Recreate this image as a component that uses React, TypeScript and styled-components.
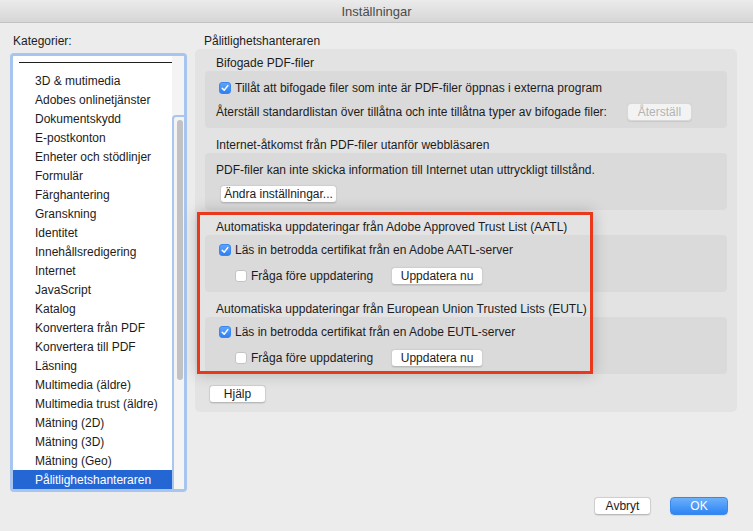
import React from 'react';
import styled, { createGlobalStyle, css } from 'styled-components';

const GlobalStyle = createGlobalStyle`
    html, body {
        margin: 0;
        padding: 0;
        background: #ececec;
    }
    body {
        font-family: 'Liberation Sans', Arial, sans-serif;
        font-size: 12px;
        color: #1c1c1c;
    }
`;

const CATEGORIES = [
    '3D & mutimedia',
    'Adobes onlinetjänster',
    'Dokumentskydd',
    'E-postkonton',
    'Enheter och stödlinjer',
    'Formulär',
    'Färghantering',
    'Granskning',
    'Identitet',
    'Innehållsredigering',
    'Internet',
    'JavaScript',
    'Katalog',
    'Konvertera från PDF',
    'Konvertera till PDF',
    'Läsning',
    'Multimedia (äldre)',
    'Multimedia trust (äldre)',
    'Mätning (2D)',
    'Mätning (3D)',
    'Mätning (Geo)',
    'Pålitlighetshanteraren',
];

const Window = styled.div`
    position: relative;
    width: 753px;
    height: 531px;
    display: flex;
    flex-direction: column;
    background: #ececec;
    overflow: hidden;
`;

const TitleBar = styled.div`
    height: 22px;
    flex: none;
    display: flex;
    align-items: center;
    justify-content: center;
    background: linear-gradient(#ebebeb, #d6d6d6);
    border-bottom: 1px solid #c2c2c2;
    color: #4b4b4b;
    font-size: 13px;
`;

const Body = styled.div`
    display: flex;
    gap: 8px;
    padding: 10px 16px 0 10px;
`;

const Sidebar = styled.div`
    width: 177px;
    flex: none;
    display: flex;
    flex-direction: column;
`;

const Label = styled.div<{ $indent?: number }>`
    height: 16px;
    line-height: 16px;
    padding-left: ${props => props.$indent || 0}px;
    white-space: nowrap;
`;

const ListBox = styled.div`
    margin-top: 4px;
    height: 439px;
    box-sizing: border-box;
    border: 3px solid #a7c5ef;
    border-radius: 4px;
    background: #fff;
    display: flex;
`;

const ListContent = styled.div`
    flex: 1;
    padding-top: 6px;
`;

const Divider = styled.div`
    height: 1px;
    margin: 0 0 8px 6px;
    background: #1e1e1e;
`;

const ListItem = styled.div<{ $selected?: boolean }>`
    height: 19px;
    line-height: 20px;
    padding-left: 22px;
    white-space: nowrap;
    color: #1c1c1c;

    ${props =>
        props.$selected &&
        css`
            background: #2466d4;
            color: #fff;
        `}
`;

const Scrollbar = styled.div`
    width: 12px;
    flex: none;
    background: #f4f4f4;
    padding-top: 59px;
    box-sizing: border-box;
    display: flex;
`;

const Track = styled.div`
    flex: 1;
    border: 2px solid #a9c6ee;
    border-right: none;
    border-bottom: none;
    border-radius: 4px 0 0 0;
    padding: 3px 0 0 3px;
`;

const Thumb = styled.div`
    width: 6px;
    height: 260px;
    border-radius: 3px;
    background: #c2c2c2;
`;

const Main = styled.div`
    flex: 1;
    min-width: 0;
    display: flex;
    flex-direction: column;
`;

const Panel = styled.div`
    background: #e3e3e3;
    border-radius: 5px;
    padding: 6px 10px 9px 10px;
    display: flex;
    flex-direction: column;
`;

const Group = styled.div`
    & + & {
        margin-top: 9px;
    }
`;

const GroupBox = styled.div<{ $tight?: boolean }>`
    background: #dadada;
    border-radius: 4px;
    height: 57px;
    box-sizing: border-box;
    padding: ${props => (props.$tight ? '5px' : '7px')} 11px 0 11px;
    display: flex;
    flex-direction: column;
    gap: ${props => (props.$tight ? '6px' : '4px')};
`;

const Row = styled.div<{ $indent?: boolean }>`
    height: 20px;
    display: flex;
    align-items: center;
    white-space: nowrap;
    padding-left: ${props => (props.$indent ? '19px' : '3px')};
`;

const PlainRow = styled(Row)`
    padding-left: 0;
`;

const Gap = styled.span<{ $width: number }>`
    width: ${props => props.$width}px;
    flex: none;
`;

const Box = styled.span<{ $checked?: boolean }>`
    width: 12px;
    height: 12px;
    box-sizing: border-box;
    border-radius: 3px;
    margin-right: 4px;
    flex: none;
    display: inline-flex;
    align-items: center;
    justify-content: center;
    background: ${props => (props.$checked ? 'linear-gradient(#5ea4fb, #2f80f2)' : '#fff')};
    border: 1px solid ${props => (props.$checked ? '#3a86ee' : '#c4c4c4')};
`;

const Button = styled.button<{ $disabled?: boolean; $primary?: boolean; $width: number }>`
    width: ${props => props.$width}px;
    height: 18px;
    padding: 0;
    box-sizing: border-box;
    font-family: inherit;
    font-size: 12px;
    line-height: 16px;
    color: #1c1c1c;
    background: #fff;
    border: 1px solid #cfcfcf;
    border-bottom-color: #b9b9b9;
    border-radius: 4px;
    box-shadow: 0 0.5px 1px rgba(0, 0, 0, 0.08);
    flex: none;

    ${props =>
        props.$disabled &&
        css`
            color: #b3b3b3;
            background: #f3f3f3;
            border-color: #d8d8d8;
        `}

    ${props =>
        props.$primary &&
        css`
            color: #fff;
            background: linear-gradient(#6cb0fb, #2d84f4);
            border-color: #3a87ee;
        `}
`;

const IndentedButton = styled(Button)`
    margin-left: 4px;
`;

const HelpRow = styled.div`
    margin-top: 11px;
    padding-left: 4px;
`;

const Footer = styled.div`
    margin-top: auto;
    display: flex;
    justify-content: flex-end;
    gap: 19px;
    padding: 0 25px 16px 0;
`;

const Highlight = styled.div`
    position: absolute;
    left: 197px;
    top: 212px;
    width: 396px;
    height: 162px;
    box-sizing: border-box;
    border: 3px solid #e8391c;
    box-shadow: 0 0 14px rgba(0, 0, 0, 0.22);
    pointer-events: none;
`;

const Check = () => (
    <svg width="8" height="8" viewBox="0 0 8 8">
        <path
            d="M1.2 4.2 L3.2 6.2 L6.8 1.6"
            fill="none"
            stroke="#fff"
            strokeWidth="1.5"
            strokeLinecap="round"
            strokeLinejoin="round"
        />
    </svg>
);

const CheckBox = ({ checked, children }: { checked?: boolean; children: React.ReactNode }) => (
    <>
        <Box $checked={checked}>{checked && <Check />}</Box>
        <span>{children}</span>
    </>
);

const UpdateGroup = ({ title, server }: { title: string; server: string }) => (
    <Group>
        <Label $indent={11}>{title}</Label>
        <GroupBox $tight>
            <Row>
                <CheckBox checked>Läs in betrodda certifikat från en Adobe {server}-server</CheckBox>
            </Row>
            <Row $indent>
                <CheckBox>Fråga före uppdatering</CheckBox>
                <Gap $width={18} />
                <Button $width={92}>Uppdatera nu</Button>
            </Row>
        </GroupBox>
    </Group>
);

const App = () => (
    <Window>
        <GlobalStyle />
        <TitleBar>Inställningar</TitleBar>
        <Body>
            <Sidebar>
                <Label $indent={3}>Kategorier:</Label>
                <ListBox>
                    <ListContent>
                        <Divider />
                        {CATEGORIES.map(name => (
                            <ListItem key={name} $selected={name === 'Pålitlighetshanteraren'}>
                                {name}
                            </ListItem>
                        ))}
                    </ListContent>
                    <Scrollbar>
                        <Track>
                            <Thumb />
                        </Track>
                    </Scrollbar>
                </ListBox>
            </Sidebar>
            <Main>
                <Label $indent={9}>Pålitlighetshanteraren</Label>
                <Panel>
                    <Group>
                        <Label $indent={11}>Bifogade PDF-filer</Label>
                        <GroupBox>
                            <Row>
                                <CheckBox checked>
                                    Tillåt att bifogade filer som inte är PDF-filer öppnas i externa program
                                </CheckBox>
                            </Row>
                            <PlainRow>
                                <span>Återställ standardlistan över tillåtna och inte tillåtna typer av bifogade filer:</span>
                                <Gap $width={20} />
                                <Button $width={65} $disabled>
                                    Återställ
                                </Button>
                            </PlainRow>
                        </GroupBox>
                    </Group>
                    <Group>
                        <Label $indent={11}>Internet-åtkomst från PDF-filer utanför webbläsaren</Label>
                        <GroupBox>
                            <PlainRow>
                                PDF-filer kan inte skicka information till Internet utan uttryckligt tillstånd.
                            </PlainRow>
                            <PlainRow>
                                <IndentedButton $width={117}>Ändra inställningar...</IndentedButton>
                            </PlainRow>
                        </GroupBox>
                    </Group>
                    <UpdateGroup title="Automatiska uppdateringar från Adobe Approved Trust List (AATL)" server="AATL" />
                    <UpdateGroup
                        title="Automatiska uppdateringar från European Union Trusted Lists (EUTL)"
                        server="EUTL"
                    />
                    <HelpRow>
                        <Button $width={57}>Hjälp</Button>
                    </HelpRow>
                </Panel>
            </Main>
        </Body>
        <Footer>
            <Button $width={57}>Avbryt</Button>
            <Button $width={58} $primary>
                OK
            </Button>
        </Footer>
        <Highlight />
    </Window>
);

export default App;
